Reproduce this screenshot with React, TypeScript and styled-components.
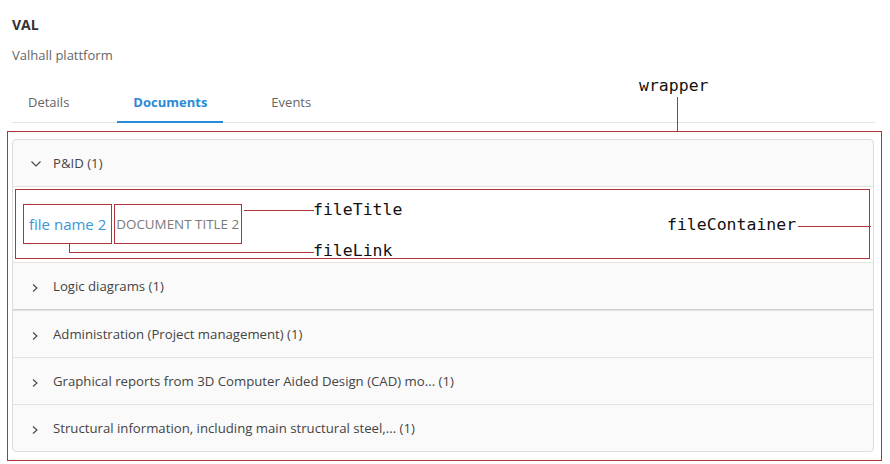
import React from 'react';
import styled, { createGlobalStyle } from 'styled-components';

const RED = '#b0353a';
const BLUE = '#2a8ad6';

const Global = createGlobalStyle`
  html, body { margin: 0; padding: 0; background: #fff; }
  body { font-family: "Open Sans", "Noto Sans", sans-serif; }
`;

const Page = styled.div`
  width: 890px;
  height: 464px;
  box-sizing: border-box;
  padding: 15px 8px 0 7px;
  overflow: hidden;
`;

const Header = styled.header`
  padding-left: 5px;
`;

const Title = styled.h1`
  margin: 0;
  font-size: 14px;
  line-height: 20px;
  font-weight: 700;
  color: #333;
`;

const Subtitle = styled.p`
  margin: 11px 0 0;
  font-size: 13px;
  line-height: 18px;
  color: #666;
`;

const TabBar = styled.nav`
  display: flex;
  gap: 32px;
  margin: 18px 0 0 5px;
  width: 863px;
  height: 40px;
  border-bottom: 1px solid #e4e4e4;
`;

const Tab = styled.div<{ $active?: boolean }>`
  position: relative;
  display: flex;
  align-items: center;
  padding: 0 16px;
  font-size: 13px;
  line-height: 18px;
  color: ${(p) => (p.$active ? BLUE : '#666')};
  font-weight: ${(p) => (p.$active ? 700 : 400)};
  &::after {
    content: '';
    position: absolute;
    left: 0;
    right: 0;
    bottom: -1px;
    height: 2px;
    background: ${(p) => (p.$active ? BLUE : 'transparent')};
  }
`;

const Wrapper = styled.section`
  position: relative;
  margin-top: 8px;
  width: 875px;
  box-sizing: border-box;
  border: 1px solid ${RED};
  padding: 7px 7px 8px 4px;
`;

const Panel = styled.div`
  border: 1px solid #dcdcdc;
  border-radius: 4px;
  background: #fafafa;
`;

const Section = styled.div<{ $heavy?: boolean }>`
  & + & {
    border-top: 1px solid #e2e2e2;
  }
  ${(p) => (p.$heavy ? 'border-bottom: 1px solid #d2d2d2;' : '')}
`;

const SectionHeader = styled.div`
  display: flex;
  align-items: center;
  gap: 9px;
  height: 46px;
  padding-left: 15px;
  font-size: 13.2px;
  color: #444;
`;

const Chevron = styled.svg`
  width: 16px;
  height: 16px;
  flex: none;
`;

const SectionBody = styled.div`
  background: #fff;
  border-top: 1px solid #e2e2e2;
  padding: 2px 3px 3px 2px;
`;

const FileContainer = styled.div`
  position: relative;
  display: flex;
  align-items: center;
  gap: 2px;
  height: 70px;
  box-sizing: border-box;
  border: 1px solid ${RED};
  padding: 0 7px;
`;

const FileLink = styled.a`
  display: flex;
  align-items: center;
  height: 40px;
  box-sizing: border-box;
  border: 1px solid ${RED};
  padding: 0 5px;
  font-size: 15px;
  color: #3795da;
  text-decoration: none;
`;

const FileTitle = styled.span`
  display: flex;
  align-items: center;
  height: 40px;
  box-sizing: border-box;
  border: 1px solid ${RED};
  padding: 0 2px 0 1px;
  font-size: 13.4px;
  color: #7a7a7a;
  text-transform: uppercase;
`;

const Note = styled.span<{ $x: number; $y: number }>`
  position: absolute;
  left: ${(p) => p.$x}px;
  top: ${(p) => p.$y}px;
  font-family: "DejaVu Sans Mono", "Liberation Mono", monospace;
  font-size: 16.5px;
  line-height: 20px;
  color: #111;
  white-space: nowrap;
`;

const HLine = styled.span<{ $x: number; $y: number; $w: number }>`
  position: absolute;
  left: ${(p) => p.$x}px;
  top: ${(p) => p.$y}px;
  width: ${(p) => p.$w}px;
  height: 1px;
  background: ${RED};
`;

const VLine = styled.span<{ $x: number; $y: number; $h: number }>`
  position: absolute;
  left: ${(p) => p.$x}px;
  top: ${(p) => p.$y}px;
  width: 1px;
  height: ${(p) => p.$h}px;
  background: ${RED};
`;

const ChevronDown = () => (
  <Chevron viewBox="0 0 16 16">
    <polyline points="3.5,6.5 8,11 12.5,6.5" fill="none" stroke="#444" strokeWidth="1.1" />
  </Chevron>
);

const ChevronRight = () => (
  <Chevron viewBox="0 0 16 16">
    <polyline points="5,6.5 9,10 5,13.5" fill="none" stroke="#444" strokeWidth="1.1" />
  </Chevron>
);

const collapsed = [
  { label: 'Logic diagrams (1)', heavy: true },
  { label: 'Administration (Project management) (1)' },
  { label: 'Graphical reports from 3D Computer Aided Design (CAD) mo... (1)' },
  { label: 'Structural information, including main structural steel,... (1)' },
];

export default function App() {
  return (
    <>
      <Global />
      <Page>
        <Header>
          <Title>VAL</Title>
          <Subtitle>Valhall plattform</Subtitle>
        </Header>
        <TabBar>
          <Tab>Details</Tab>
          <Tab $active>Documents</Tab>
          <Tab>Events</Tab>
        </TabBar>
        <Wrapper>
          <Note $x={631} $y={-56}>wrapper</Note>
          <VLine $x={669} $y={-35} $h={35} />
          <Panel>
            <Section>
              <SectionHeader>
                <ChevronDown />
                P&amp;ID (1)
              </SectionHeader>
              <SectionBody>
                <FileContainer>
                  <FileLink href="#">file name 2</FileLink>
                  <FileTitle>Document title 2</FileTitle>
                  <HLine $x={228} $y={20} $w={70} />
                  <Note $x={297} $y={10}>fileTitle</Note>
                  <VLine $x={53} $y={54} $h={9} />
                  <HLine $x={53} $y={62} $w={245} />
                  <Note $x={297} $y={51}>fileLink</Note>
                  <Note $x={651} $y={25}>fileContainer</Note>
                  <HLine $x={782} $y={36} $w={73} />
                </FileContainer>
              </SectionBody>
            </Section>
            {collapsed.map((s) => (
              <Section key={s.label} $heavy={s.heavy}>
                <SectionHeader>
                  <ChevronRight />
                  {s.label}
                </SectionHeader>
              </Section>
            ))}
          </Panel>
        </Wrapper>
      </Page>
    </>
  );
}
